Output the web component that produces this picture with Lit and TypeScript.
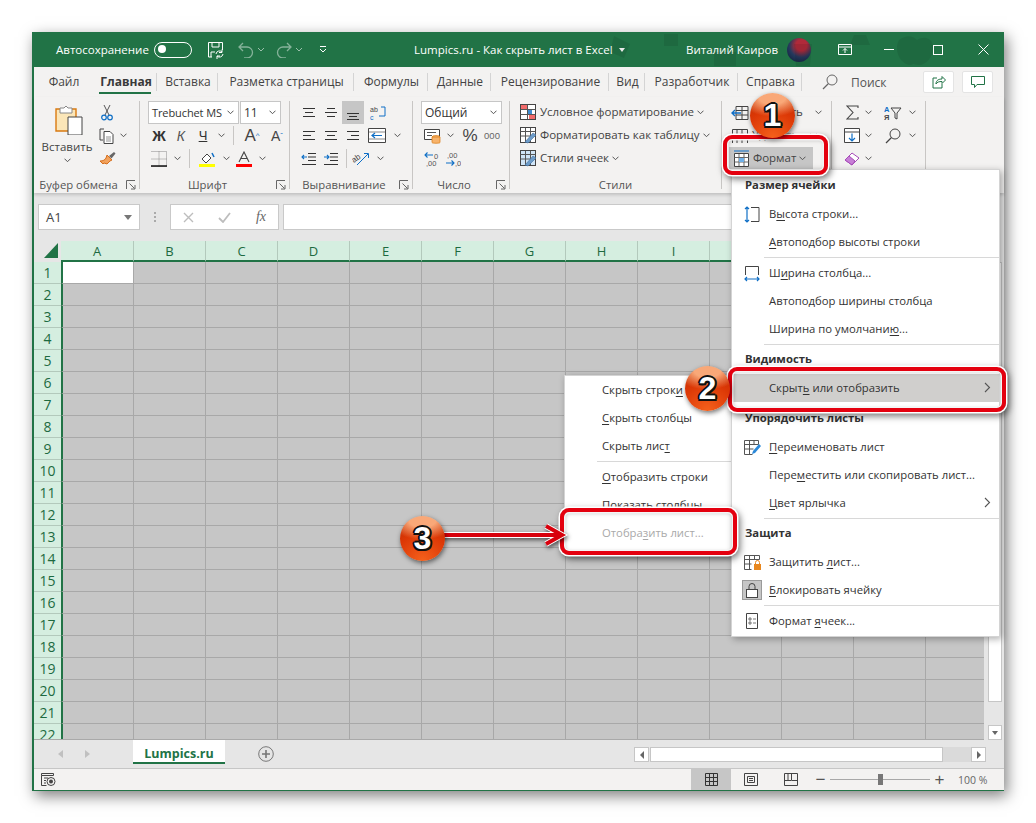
import { LitElement, html, css, svg } from "lit";
import { customElement } from "lit/decorators.js";

const chev = html`<svg class="chev" width="7" height="5" viewBox="0 0 7 5"><path d="M.5 .7l3 3 3-3" fill="none" stroke="#555" stroke-width="1"/></svg>`;
const launcher = html`<svg class="launch" width="10" height="10" viewBox="0 0 10 10"><path d="M.5 9V.5H9M3.5 3.5l5 5M9 5v4H5" fill="none" stroke="#666"/></svg>`;
const lines = (ys: [number, number][]) => html`<svg width="16" height="16" viewBox="0 0 16 16">${ys.map(([a, b], i) => svg`<path d="M${a} ${3 + i * 4}.5H${b}" stroke="#333" stroke-width="1"/>`)}</svg>`;
const cell = (x: string) => html`<svg width="18" height="16" viewBox="0 0 18 16">${x === "ins" ? svg`<path d="M5 1.5h12v13H5zM5 5.5h12M5 10h12M11 2v12" fill="none" stroke="#444"/><path d="M1 8h9M4 5L1 8l3 3" fill="none" stroke="#0f6fc6" stroke-width="1.4"/>` : svg`<path d="M1.5 1.5h15v5h-15zM6 1.5v5M11 1.5v5M1.5 11h15v4M1.5 11v4M6 11v4M11 11v4" fill="none" stroke="#444"/><path d="M9 6l4 4M13 6l-4 4" stroke="#d13438" stroke-width="1.2"/>`}</svg>`;
const tableIcon = (brush: boolean) => html`<svg width="17" height="17" viewBox="0 0 17 17"><rect x=".5" y=".5" width="15" height="15" fill="${brush ? "#fff" : "#cfe4f6"}" stroke="#444"/><path d="M.5 4.5h15M5.5 1v14M10.5 1v14M.5 9h15" stroke="#555" fill="none"/><path d="M5 15L13 6l3 2-8 8z" fill="#6d9cc9" stroke="#3d6d9f" stroke-width=".6"/></svg>`;

const menu1: any[] = [
  ["h", "Размер ячейки"],
  ["i", html`В<u>ы</u>сота строки...`, "rowh"],
  ["i", html`<u>А</u>втоподбор высоты строки`],
  ["s"],
  ["i", html`Ш<u>и</u>рина столбца...`, "colw"],
  ["i", html`Автоподбор ширины столбца`],
  ["i", html`Ширина по умолчани<u>ю</u>...`],
  ["s"],
  ["h", "Видимость", "flush"],
  ["i", html`Скрыт<u>ь</u> или отобразить`, "", "sub hov"],
  ["h", "Упорядочить листы", "gap"],
  ["i", html`<u>П</u>ереименовать лист`, "ren"],
  ["i", html`Пере<u>м</u>естить или скопировать лист...`],
  ["i", html`<u>Ц</u>вет ярлычка`, "", "sub"],
  ["s"],
  ["h", "Защита", "flush"],
  ["i", html`Защитить <u>л</u>ист...`, "prot"],
  ["i", html`<u>Б</u>локировать ячейку`, "lock"],
  ["s"],
  ["i", html`Формат <u>я</u>чеек...`, "fmt"],
];

const icons: Record<string, any> = {
  rowh: html`<svg width="16" height="17" viewBox="0 0 16 17"><path d="M7 1.5h8v14H7" fill="none" stroke="#444"/><path d="M3 1v15M1 3l2-2 2 2M1 14l2 2 2-2" fill="none" stroke="#0f6fc6" stroke-width="1.2"/></svg>`,
  colw: html`<svg width="16" height="17" viewBox="0 0 16 17"><path d="M1.5 10V1.5h13V10" fill="none" stroke="#444"/><path d="M1 14h14M3 12l-2 2 2 2M13 12l2 2-2 2" fill="none" stroke="#0f6fc6" stroke-width="1.2"/></svg>`,
  ren: html`<svg width="17" height="17" viewBox="0 0 17 17"><path d="M.5 1.5h14v4M.5 1.5v14h8M.5 5.5h14M.5 10h9M5.5 2v13M10 2v4" fill="none" stroke="#555"/><path d="M8 15l1-3 6-7 2 2-6 7z" fill="#2b88d8"/></svg>`,
  prot: html`<svg width="17" height="17" viewBox="0 0 17 17"><path d="M.5 1.5h15v4M.5 1.5v14h7M.5 5.5h15M.5 10h7M5.5 2v13M10.5 2v4" fill="none" stroke="#555"/><rect x="10" y="10" width="7" height="6" fill="#e8871e"/><path d="M11.5 10V8.5a2 2 0 014 0V10" fill="none" stroke="#e8871e"/></svg>`,
  lock: html`<span class="lockbg"><svg width="14" height="16" viewBox="0 0 14 16"><rect x="1.5" y="7.5" width="11" height="8" fill="#fff" stroke="#444"/><path d="M4 7.5V4.5a3 3 0 016 0v3" fill="none" stroke="#444"/></svg></span>`,
  fmt: html`<svg width="14" height="16" viewBox="0 0 14 16"><path d="M1.5.5h11v15h-11z" fill="#fff" stroke="#444"/><path d="M4 5h2v2H4zM4 9h2v2H4zM8 6h3M8 10h3" fill="none" stroke="#555" stroke-width=".8"/></svg>`,
};

const renderMenu = (items: any[]) => items.map((m) => {
  if (m[0] === "h") return html`<div class="mh ${m[2] || ""}">${m[1]}</div>`;
  if (m[0] === "s") return html`<div class="ms"></div>`;
  return html`<div class="mi ${m[3] || ""}"><span class="mic">${m[2] ? icons[m[2]] : ""}</span><span class="mt">${m[1]}</span>${(m[3] || "").includes("sub") ? html`<svg class="arr" width="7" height="11" viewBox="0 0 7 11"><path d="M1 1l4.5 4.5L1 10" fill="none" stroke="#555" stroke-width="1.1"/></svg>` : ""}</div>`;
});

@customElement("app-root")
export class AppRoot extends LitElement {
  static styles = css`
    :host { display: block; position: relative; width: 1036px; height: 823px; background: #fff; padding: 32px 32px 0; box-sizing: border-box; overflow: hidden;
      font-family: "Open Sans", "Noto Sans", sans-serif; font-size: 11.5px; color: #444; }
    u { text-decoration-thickness: 1px; text-underline-offset: 2px; }
    svg { display: block; flex: none; }
    .win { width: 972px; height: 759px; box-sizing: border-box; display: flex; flex-direction: column; border-left: 2px solid #217346; border-bottom: 1px solid #217346; box-shadow: 3px 5px 14px rgba(0,0,0,.5); background: #f3f2f1; }
    .title { position: relative; height: 35px; margin-left: -2px; background: #217346; color: #fff; display: flex; align-items: center; flex: none; overflow: hidden; font-size: 11.5px; }
    .title > * { flex: none; }
    .doodle { position: absolute; right: 0; top: 0; opacity: .08; }
    .auto { margin-left: 24px; width: 98px; }
    .toggle { box-sizing: border-box; width: 38px; height: 16px; border: 1.4px solid #fff; border-radius: 9px; position: relative; }
    .toggle::after { content: ""; position: absolute; left: 3px; top: 2.5px; width: 8px; height: 8px; border-radius: 50%; background: #fff; }
    .t-save { margin-left: 15px; }
    .t-undo { margin-left: 14px; opacity: .45; }
    .t-ch { margin-left: 3px; opacity: .55; }
    .t-redo { margin-left: 11px; opacity: .45; }
    .t-cust { margin-left: 16px; }
    .doc { margin-left: 87px; width: 207px; white-space: nowrap; }
    .doc i { display: inline-block; margin-left: 6px; border: 3px solid transparent; border-top: 4px solid #fff; border-bottom: 0; vertical-align: 2px; }
    .user { margin-left: 65px; width: 101px; white-space: nowrap; }
    .avatar { width: 24px; height: 24px; border-radius: 50%; background: radial-gradient(circle at 60% 30%, #b02a3a 0 25%, #25395d 55%, #0c1b33 100%); }
    .t-opt { margin-left: 27px; }
    .t-min { margin-left: 32px; }
    .t-max { margin-left: 39px; }
    .t-close { margin-left: 35px; }

    .tabs { height: 30px; display: flex; align-items: center; flex: none; position: relative; }
    .tab { box-sizing: border-box; height: 18px; line-height: 18px; text-align: center; white-space: nowrap; font-size: 12px; }
    .bar { border-right: 1px solid #d4d4d4; padding-left: 2px; }
    .w60 { width: 60px; } .w63 { width: 63px; } .w61 { width: 61px; } .w136 { width: 136px; } .w74 { width: 74px; } .w118 { width: 118px; } .w36 { width: 36px; } .w93 { width: 93px; } .w64 { width: 64px; }
    .active { font-weight: 700; color: #3a3a3a; position: relative; }
    .active::after { content: ""; position: absolute; left: 5px; right: 5px; top: 19px; height: 2px; background: #217346; }
    .search { margin-left: 20px; display: flex; align-items: center; gap: 13px; font-size: 12px; color: #555; }
    .tbtn { position: absolute; top: 4px; width: 31px; height: 22px; box-sizing: border-box; background: #fff; border: 1px solid #e4e4e4; border-radius: 2px; display: flex; align-items: center; justify-content: center; }
    .share { left: 889px; } .comment { left: 928px; }

    .ribbon { height: 96px; display: flex; flex: none; position: relative; box-shadow: 0 2px 3px rgba(0,0,0,.16); }
    .grp { box-sizing: border-box; border-right: 1px solid #c8c6c4; height: 88px; margin-top: 4px; display: flex; flex-direction: column; position: relative; }
    .g1 { width: 106px; } .g2 { width: 150px; } .g3 { width: 123px; } .g4 { width: 97px; } .g5 { width: 212px; } .g6 { width: 110px; } .g7 { width: 94px; }
    .body { flex: none; height: 70px; box-sizing: border-box; }
    .g1 .body { display: flex; }
    .lbl { height: 14px; line-height: 13px; margin-top: 7px; text-align: center; font-size: 11.3px; color: #555; white-space: nowrap; box-sizing: border-box; }
    .g1 .lbl { padding-right: 16px; } .g2 .lbl { padding-right: 14px; } .g3 .lbl { padding-right: 14px; } .g4 .lbl { padding-right: 14px; }
    .launch { position: absolute; right: 3px; bottom: -1px; }
    .paste { width: 62px; margin-left: 2px; display: flex; flex-direction: column; align-items: center; }
    .paste svg:first-child { margin-top: 4px; margin-left: 3px; }
    .paste span { margin-top: 4px; line-height: 16px; }
    .paste .chev { margin-top: 3px; }
    .r { height: 23px; display: flex; align-items: center; white-space: nowrap; }
    .c { display: flex; align-items: center; justify-content: center; height: 23px; flex: none; box-sizing: border-box; }
    .c22 { width: 22px; } .c14 { width: 14px; } .c18 { width: 18px; } .c26 { width: 26px; } .c20 { width: 20px; } .c24 { width: 24px; }
    .on { background: #c6c6c6; }
    .vsep { width: 1px; height: 19px; background: #c8c6c4; margin: 0 5px; flex: none; }
    .pl9 { padding-left: 8px; }
    .select { box-sizing: border-box; height: 23px; background: #fff; border: 1px solid #c6c6c6; display: flex; align-items: center; justify-content: space-between; padding: 0 4px 0 3px; font-size: 12px; color: #333; flex: none; }
    .sfont { width: 91px; font-size: 11px; letter-spacing: -.1px; }
    .ssize { width: 41px; margin-left: 1px; }
    .snum { width: 81px; }
    .b { font: 700 15px "Liberation Sans", sans-serif; color: #333; }
    .it { font: italic 14px "Liberation Sans", sans-serif; color: #555; }
    .un { font: 13px "Liberation Sans", sans-serif; color: #333; text-decoration: underline; }
    .fa { font: 17px "Liberation Sans", sans-serif; color: #444; position: relative; }
    .fa2 { font: 14px "Liberation Sans", sans-serif; color: #444; }
    .fa sup, .fa2 sup { font-size: 8px; color: #0f6fc6; vertical-align: 6px; line-height: 0; }
    .pct { font: 17px "Liberation Sans", sans-serif; color: #444; }
    .th { font: 9.5px "Liberation Sans", sans-serif; color: #666; }
    .stylerow { padding-left: 10px; gap: 3px; }
    .stylerow span, .cellrow span, .fmtbtn span { padding-bottom: 2px; }
    .cellrow { padding-left: 9px; gap: 3px; }
    .cellrow .chev { margin-left: 9px; }
    .fmtbtn { margin-left: 7px; width: 84px; padding-left: 4px; box-sizing: border-box; gap: 3px; background: #c6c6c6; }
    .ed { padding-left: 11px; }
    .ml6 { margin-left: 6px; }

    .fbar { height: 48px; background: #e6e6e6; flex: none; display: flex; padding-top: 11px; box-sizing: border-box; }
    .fb { box-sizing: border-box; height: 26px; background: #fff; border: 1px solid #c9c9c9; display: flex; align-items: center; flex: none; }
    .name { width: 102px; margin-left: 4px; padding: 0 7px; justify-content: space-between; font-size: 13px; }
    .name i { border: 4px solid transparent; border-top: 5px solid #777; border-bottom: 0; }
    .dots { width: 30px; display: flex; flex-direction: column; align-items: center; justify-content: center; gap: 2px; height: 26px; flex: none; }
    .dots b { width: 2px; height: 2px; background: #aaa; }
    .fx { width: 109px; justify-content: space-between; padding: 0 12px; }
    .fxt { font: italic 14px "Liberation Serif", serif; color: #666; }
    .input { flex: 1; margin: 0 4px; }

    .sheet { height: 499px; display: flex; flex: none; background: #e6e6e6; }
    .smain { width: 950px; display: flex; flex-direction: column; overflow: hidden; flex: none; border-bottom: 1px solid #a9a9a9; box-sizing: border-box; }
    .hrow { display: flex; height: 21px; flex: none; background: #e6e6e6; }
    .corner { width: 27px; flex: none; background: #e6e6e6; position: relative; }
    .corner svg { position: absolute; left: 10px; top: 2px; }
    .hc { width: 72px; flex: none; box-sizing: border-box; background: #d5eee0; border-right: 1px solid #b3c9bc; border-bottom: 2px solid #217346; text-align: center; font-size: 13px; line-height: 21px; color: #1d6a40; }
    .hc.first { width: 73px; }
    .row { display: flex; height: 22px; flex: none; }
    .rh { width: 27px; flex: none; box-sizing: border-box; background: #d5eee0; border-bottom: 1px solid #b3c9bc; text-align: center; font-size: 14px; line-height: 21px; color: #1d6a40; }
    .gc { width: 72px; flex: none; box-sizing: border-box; background: #c6c6c6; border-right: 1px solid #a8a8a8; border-bottom: 1px solid #a8a8a8; }
    .gc.first { width: 73px; border-left: 2px solid #217346; }
    .gc.sel { background: #fff; }
    .vs { flex: 1; display: flex; flex-direction: column; padding: 21px 2px 0 4px; }
    .vthumb { height: 440px; background: #fff; border: 1px solid #c6c6c6; box-sizing: border-box; }
    .vdown { margin-top: auto; height: 15px; background: #fff; border: 1px solid #c6c6c6; box-sizing: border-box; display: flex; align-items: center; justify-content: center; }
    .vdown i { border: 3.5px solid transparent; border-top: 4px solid #666; border-bottom: 0; }

    .stabs { height: 28px; background: #e6e6e6; display: flex; flex: none; }
    .nav { width: 99px; flex: none; box-sizing: border-box; padding: 0 24px; display: flex; align-items: center; height: 28px; gap: 22px; }
    .nav i { display: block; border: 4px solid transparent; }
    .nav .l { border-right: 5px solid #c0c0c0; border-left: 0; }
    .nav .g { border-left: 5px solid #c0c0c0; border-right: 0; }
    .stab { width: 92px; height: 24px; box-sizing: border-box; padding-top: 3px; background: #fff; border-bottom: 2px solid #217346; text-align: center; font-weight: 700; font-size: 12.5px; line-height: 22px; color: #217346; flex: none; }
    .plus { margin-left: 33px; margin-top: 6px; flex: none; }
    .hs { margin-left: 360px; margin-top: 7px; width: 352px; height: 15px; display: flex; flex: none; }
    .hb { width: 15px; height: 15px; flex: none; box-sizing: border-box; background: #fff; border: 1px solid #c6c6c6; display: flex; align-items: center; justify-content: center; }
    .hb i { border: 4px solid transparent; }
    .hb .l { border-right: 4px solid #666; border-left: 0; }
    .hb .g { border-left: 4px solid #666; border-right: 0; }
    .hthumb { width: 293px; margin-left: 1px; background: #fff; border: 1px solid #c6c6c6; box-sizing: border-box; flex: none; }
    .htrack { flex: 1; background: #dadada; }

    .status { flex: 1; border-top: 1px solid #c6c6c6; display: flex; align-items: center; box-sizing: border-box; }
    .st-ic { margin-left: 7px; }
    .st-sp { flex: 1; }
    .vb { width: 40px; height: 21px; display: flex; align-items: center; justify-content: center; flex: none; }
    .vb.act { background: #c6c6c6; }
    .zm { width: 19px; display: flex; justify-content: center; font: 17px "Liberation Sans", sans-serif; color: #555; line-height: 20px; flex: none; }
    .slider { width: 100px; height: 1px; background: #a8a8a8; position: relative; flex: none; }
    .slider b { position: absolute; left: 48px; top: -5px; width: 5px; height: 11px; background: #777; }
    .pc { width: 55px; box-sizing: border-box; padding-left: 9px; font-size: 10.5px; color: #666; flex: none; white-space: nowrap; }

    .menu { position: absolute; box-sizing: border-box; background: #fff; border: 1px solid #d4d4d4; box-shadow: 2px 2px 7px rgba(0,0,0,.32); color: #333; font-size: 11.3px; }
    .m1 { left: 731px; top: 169px; width: 269px; height: 468px; padding-top: 1px; z-index: 3; }
    .m2 { left: 564px; top: 375px; width: 168px; height: 178px; z-index: 2; }
    .mh { height: 29px; line-height: 28px; box-sizing: border-box; padding-left: 13px; font-weight: 700; color: #333; }
    .mh.flush { margin-top: -1px; }
    .mh.gap { margin-top: 2px; }
    .mi { height: 28px; display: flex; align-items: center; white-space: nowrap; padding-left: 12px; gap: 9px; position: relative; }
    .mt { padding-bottom: 2px; }
    .mic { width: 16px; height: 17px; display: flex; align-items: center; justify-content: center; flex: none; }
    .lockbg { display: flex; align-items: center; justify-content: center; flex: none; width: 20px; height: 20px; background: #c6c6c6; border: 1px solid #9a9a9a; box-sizing: border-box; }
    .hov { background: #d0cfcd; }
    .arr { position: absolute; right: 8px; top: 8px; }
    .ms { height: 1px; background: #d8d8d8; margin: 1px 0 1px 32px; }
    .m2 .mi { padding-left: 37px; }
    .m2 .dis { color: #a9a9a9; }

    .rbox { position: absolute; box-sizing: border-box; border: 4px solid #e4000f; border-radius: 9px; box-shadow: 0 0 0 1.5px #fff, inset 0 0 0 1.5px #f4f4f4, 2px 3px 7px 1px rgba(0,0,0,.55), inset 1px 1px 4px rgba(0,0,0,.25); z-index: 4; }
    .rb1 { left: 723px; top: 135px; width: 105px; height: 40px; }
    .rb2 { left: 728px; top: 367px; width: 278px; height: 45px; }
    .rb3 { left: 560px; top: 508px; width: 177px; height: 47px; }
    .badge { position: absolute; width: 45px; height: 45px; border-radius: 50%; z-index: 6; display: flex; align-items: center; justify-content: center;
      background: radial-gradient(ellipse 34px 20px at 50% 8%, #f9a878 0 40%, rgba(249,168,120,0) 100%), radial-gradient(circle at 50% 100%, #f5611c 0, #dc3806 55%, #b82a00 100%);
      box-shadow: 1px 2px 5px rgba(0,0,0,.55);
      font: 700 32px "Liberation Sans", sans-serif; color: #fff;
      text-shadow: -2px 0 #111, 2px 0 #111, 0 -2px #111, 0 2px #111, -1.5px -1.5px #111, 1.5px -1.5px #111, -1.5px 1.5px #111, 1.5px 1.5px #111; }
    .ba { left: 750px; top: 93px; }
    .bb { left: 685px; top: 366px; }
    .bc { left: 400px; top: 516px; }
    .arrow { position: absolute; left: 440px; top: 519px; z-index: 5; filter: drop-shadow(1px 2px 2px rgba(0,0,0,.6)); }
  `;

  render() {
    const cols = "ABCDEFGHIJKLM".split("");
    const rows = Array.from({ length: 22 }, (_, i) => i + 1);
    return html`
      <div class="win">
        <div class="title">
          <svg class="doodle" width="400" height="35" viewBox="0 0 400 35"><path d="M295 8c8-6 14-4 18 0 6-4 14-3 16 5 2 9-6 20-14 20-4 0-5-2-8 0-10 0-18-14-12-25z" fill="#000"/><path d="M190 12h18l-2 22h-14zM200 12l4-9" fill="#000"/><path d="M60 2h14v12H60zM110 20h22v14h-22zM10 4l16 8-6 14-14-6zM250 3h12l4 10h-20z" fill="#000"/></svg>
          <span class="auto">Автосохранение</span>
          <span class="toggle"></span>
          <svg class="t-save" width="17" height="18" viewBox="0 0 17 18"><path d="M5 16H1.5V1.5h14V9M5 1.5V6h7V1.5M4 16v-5h4" fill="none" stroke="#fff"/><path d="M9 13a3.5 3.5 0 016-2M16 13a3.5 3.5 0 01-6 2M15 8.500v3h-3M10 18v-3h3" fill="none" stroke="#fff" stroke-width="1"/></svg>
          <svg class="t-undo" width="16" height="16" viewBox="0 0 16 16"><path d="M5 1L1 5l4 4M1 5h8a5.500 5.500 0 010 11H6" fill="none" stroke="#fff" stroke-width="1.3"/></svg>
          <svg class="t-ch" width="8" height="5" viewBox="0 0 8 5"><path d="M1 1l3 3 3-3" fill="none" stroke="#fff"/></svg>
          <svg class="t-redo" width="16" height="16" viewBox="0 0 16 16"><path d="M11 1l4 4-4 4M15 5H7a5.500 5.500 0 000 11h3" fill="none" stroke="#fff" stroke-width="1.3"/></svg>
          <svg class="t-ch" width="8" height="5" viewBox="0 0 8 5"><path d="M1 1l3 3 3-3" fill="none" stroke="#fff"/></svg>
          <svg class="t-cust" width="8" height="7" viewBox="0 0 8 7"><path d="M1 .5h6M1 3l3 3 3-3" fill="none" stroke="#fff"/></svg>
          <span class="doc">Lumpics.ru - Как скрыть лист в Excel<i></i></span>
          <span class="user">Виталий Каиров</span>
          <span class="avatar"></span>
          <svg class="t-opt" width="14" height="11" viewBox="0 0 14 11"><path d="M.5.500h13v10H.5zM1 3h12M7 9V4.500M5 6.500l2-2 2 2" fill="none" stroke="#fff"/></svg>
          <svg class="t-min" width="10" height="1" viewBox="0 0 10 1"><path d="M0 .5h10" stroke="#fff"/></svg>
          <svg class="t-max" width="10" height="10" viewBox="0 0 10 10"><rect x=".5" y=".5" width="9" height="9" fill="none" stroke="#fff"/></svg>
          <svg class="t-close" width="11" height="11" viewBox="0 0 11 11"><path d="M.5.500l10 10M10.500.500l-10 10" stroke="#fff"/></svg>
        </div>

        <div class="tabs">
          <span class="tab w60">Файл</span>
          <span class="tab w63 bar active">Главная</span>
          <span class="tab w61 bar">Вставка</span>
          <span class="tab w136 bar">Разметка страницы</span>
          <span class="tab w74 bar">Формулы</span>
          <span class="tab w63 bar">Данные</span>
          <span class="tab w118 bar">Рецензирование</span>
          <span class="tab w36 bar">Вид</span>
          <span class="tab w93 bar">Разработчик</span>
          <span class="tab w64 bar">Справка</span>
          <span class="search"><svg width="16" height="16" viewBox="0 0 16 16"><circle cx="10" cy="6" r="5" fill="none" stroke="#666"/><path d="M6.500 9.500L1 15" stroke="#666" stroke-width="1.2"/></svg><span>Поиск</span></span>
          <span class="tbtn share"><svg width="14" height="14" viewBox="0 0 14 14"><path d="M5 3H1v10h9V9" fill="none" stroke="#217346"/><path d="M4 9c0-4 3-5 6-5V1.500L13.500 5 10 8.500V6.500C7 6.500 5 7 4 9z" fill="none" stroke="#217346"/></svg></span>
          <span class="tbtn comment"><svg width="14" height="13" viewBox="0 0 14 13"><path d="M.5.500h13v8H6l-2.500 3v-3h-3z" fill="none" stroke="#217346"/></svg></span>
        </div>

        <div class="ribbon">
          <div class="grp g1">
            <div class="body">
              <div class="paste">
                <svg width="28" height="30" viewBox="0 0 28 30"><path d="M1 4h20v22H1z" fill="#fbe6b8" stroke="#d97a10" stroke-width="1.4"/><path d="M5 3h4l2-2 2 2h4v5H5z" fill="#fff" stroke="#888"/><path d="M13 12h14v18H13z" fill="#fff" stroke="#444"/></svg>
                <span>Вставить</span>${chev}
              </div>
              <div>
                <div class="r"><span class="c c18"><svg width="12" height="17" viewBox="0 0 12 17"><path d="M3 1l5 10M9 1L4 11" stroke="#555" fill="none"/><circle cx="3" cy="13.500" r="2.300" fill="none" stroke="#0f6fc6" stroke-width="1.200"/><circle cx="9" cy="13.500" r="2.300" fill="none" stroke="#0f6fc6" stroke-width="1.200"/></svg></span></div>
                <div class="r"><span class="c c18"><svg width="16" height="16" viewBox="0 0 16 16"><path d="M5 1H1v11h3" fill="none" stroke="#444"/><path d="M5 3.500h6l3 3v9H5z" fill="#fff" stroke="#444"/><path d="M7 9h5M7 11h5M7 13h5" stroke="#666" stroke-width=".7"/></svg></span><span class="c c14">${chev}</span></div>
                <div class="r"><span class="c c18"><svg width="17" height="15" viewBox="0 0 17 15"><path d="M10 5l5-4 1.500 1.500-4 5z" fill="#666"/><path d="M8 4l5 5-2 1-3 3-3-1-1 1-3-3c3 0 5-1 6-3z" fill="#f2a25c" stroke="#d1640f" stroke-width=".9"/></svg></span></div>
              </div>
            </div>
            <div class="lbl">Буфер обмена</div>${launcher}
          </div>

          <div class="grp g2">
            <div class="body pl9">
              <div class="r"><span class="select sfont">Trebuchet MS${chev}</span><span class="select ssize">11${chev}</span></div>
              <div class="r"><span class="c c22 b">Ж</span><span class="c c22 it">К</span><span class="c c22 un">Ч</span><span class="c c14">${chev}</span><span class="vsep"></span><span class="c c26 fa">A<sup>^</sup></span><span class="c c24 fa2">A<sup>ˇ</sup></span></div>
              <div class="r"><span class="c c22"><svg width="16" height="16" viewBox="0 0 16 16"><path d="M.5.500h15v15H.5M8 .500v15M.5 8h15" fill="none" stroke="#888" stroke-dasharray="1 1"/><path d="M0 15h16" stroke="#111" stroke-width="1.500"/></svg></span><span class="c c14">${chev}</span><span class="vsep"></span><span class="c c24"><svg width="17" height="16" viewBox="0 0 17 16"><path d="M3 8l5-5 4 4-5 5z" fill="#fff" stroke="#444"/><path d="M13 2l2 4" stroke="#0f6fc6" stroke-width="1.500"/><path d="M0 13h16v3H0z" fill="#ffff00"/></svg></span><span class="c c14">${chev}</span><span class="c c22"><svg width="16" height="16" viewBox="0 0 16 16"><path d="M3 11L8 1l5 10M5 7.500h6" fill="none" stroke="#444" stroke-width="1.100"/><path d="M0 13h16v3H0z" fill="#ff0000"/></svg></span><span class="c c14">${chev}</span></div>
            </div>
            <div class="lbl">Шрифт</div>${launcher}
          </div>

          <div class="grp g3">
            <div class="body pl9">
              <div class="r"><span class="c c22">${lines([[2, 14], [4, 12], [2, 14]])}</span><span class="c c22">${lines([[4, 12], [2, 14], [4, 12]])}</span><span class="c c22 on"><svg width="16" height="16" viewBox="0 0 16 16"><path d="M2 8.500h12M4 11.500h8M2 14.500h12" stroke="#333"/></svg></span><span class="c c26"><svg width="17" height="16" viewBox="0 0 17 16"><text x="1" y="7" font-size="7" font-family="Liberation Sans" fill="#444">ab</text><text x="1" y="15" font-size="7" font-family="Liberation Sans" fill="#0f6fc6">c</text><path d="M12 2h4v9h-6" fill="none" stroke="#0f6fc6"/></svg></span></div>
              <div class="r"><span class="c c22">${lines([[2, 14], [2, 10], [2, 14]])}</span><span class="c c22">${lines([[2, 14], [4, 12], [2, 14]])}</span><span class="c c22">${lines([[2, 14], [6, 14], [2, 14]])}</span><span class="c c26"><svg width="18" height="15" viewBox="0 0 18 15"><path d="M.5.500h17v14H.5z" fill="#fff" stroke="#444"/><path d="M1 4h16M1 11h16" stroke="#888"/><path d="M14 7.500H4M7 5L4 7.500 7 10" fill="none" stroke="#0f6fc6" stroke-width="1.200"/></svg></span><span class="c c14">${chev}</span></div>
              <div class="r"><span class="c c22"><svg width="16" height="14" viewBox="0 0 16 14"><path d="M7 1.500h8M7 5h8M7 8.500h8M1 12.500h14" stroke="#333"/><path d="M6 5H1M3 3L1 5l2 2" fill="none" stroke="#0f6fc6" stroke-width="1.100"/></svg></span><span class="c c22"><svg width="16" height="14" viewBox="0 0 16 14"><path d="M7 1.500h8M7 5h8M7 8.500h8M1 12.500h14" stroke="#333"/><path d="M1 5h5M4 3l2 2-2 2" fill="none" stroke="#0f6fc6" stroke-width="1.100"/></svg></span><span class="vsep" style="margin:0 0 0 4px"></span><span class="c c26"><svg width="17" height="15" viewBox="0 0 17 15"><text x="0" y="10" font-size="8" font-family="Liberation Sans" fill="#444" transform="rotate(-35 4 8)">ab</text><path d="M5 14L16 3M12 2.500h4.500V7" fill="none" stroke="#0f6fc6"/></svg></span><span class="c c14">${chev}</span></div>
            </div>
            <div class="lbl">Выравнивание</div>${launcher}
          </div>

          <div class="grp g4">
            <div class="body pl9">
              <div class="r"><span class="select snum">Общий${chev}</span></div>
              <div class="r"><span class="c c22"><svg width="17" height="16" viewBox="0 0 17 16"><path d="M.5 1.500h15v10H.5z" fill="#fff" stroke="#444"/><path d="M3 4h9v1H3zM3 7h5v1H3z" fill="#555"/><ellipse cx="12" cy="9" rx="4" ry="1.500" fill="#f7b36b" stroke="#d97a10" stroke-width=".7"/><path d="M8 9v5.500c0 1 8 1 8 0V9z" fill="#f7b36b" stroke="#d97a10" stroke-width=".7"/></svg></span><span class="c c14">${chev}</span><span class="c c26 pct">%</span><span class="c c18 th">000</span></div>
              <div class="r"><span class="c c22"><svg width="16" height="16" viewBox="0 0 16 16"><path d="M9 4H1M3.500 1.500L1 4l2.500 2.500" fill="none" stroke="#0f6fc6" stroke-width="1.100"/><text x="10" y="8" font-size="7.500" font-family="Liberation Sans" fill="#555">0</text><text x="2" y="15" font-size="7.500" font-family="Liberation Sans" fill="#555">,00</text></svg></span><span class="c c20"><svg width="16" height="16" viewBox="0 0 16 16"><text x="2" y="7" font-size="7.500" font-family="Liberation Sans" fill="#555">,00</text><path d="M1 12h8M6.500 9.500L9 12l-2.500 2.500" fill="none" stroke="#0f6fc6" stroke-width="1.100"/><text x="10" y="15" font-size="7.500" font-family="Liberation Sans" fill="#555">,0</text></svg></span></div>
            </div>
            <div class="lbl">Число</div>${launcher}
          </div>

          <div class="grp g5">
            <div class="body">
              <div class="r stylerow"><svg width="17" height="17" viewBox="0 0 17 17"><rect x=".5" y=".5" width="15" height="15" fill="#fff" stroke="#444"/><path d="M1 1h6v4H1zM9 11h6v4H9z" fill="#f26b6b"/><path d="M7 5h5v6H7z" fill="#0f6fc6" opacity=".8"/><path d="M.5 5.500h15M.5 10.500h15M7.500 1v14" stroke="#555"/></svg><span>Условное форматирование</span>${chev}</div>
              <div class="r stylerow">${tableIcon(true)}<span>Форматировать как таблицу</span>${chev}</div>
              <div class="r stylerow">${tableIcon(false)}<span>Стили ячеек</span>${chev}</div>
            </div>
            <div class="lbl">Стили</div>
          </div>

          <div class="grp g6">
            <div class="body">
              <div class="r cellrow">${cell("ins")}<span>Вставить</span>${chev}</div>
              <div class="r cellrow">${cell("del")}<span>Удалить</span>${chev}</div>
              <div class="r fmtbtn"><svg width="17" height="17" viewBox="0 0 17 17"><path d="M1.500 3.500h14v13h-14z" fill="#fff" stroke="#444"/><path d="M1.500 7.500h14M1.500 12h14M6 4v12M11 4v12" stroke="#666"/><path d="M6 8h5v4H6z" fill="#6fb0e8"/><path d="M1 1h15" stroke="#0f6fc6"/></svg><span>Формат</span>${chev}</div>
            </div>
            <div class="lbl">Ячейки</div>
          </div>

          <div class="grp g7">
            <div class="body ed">
              <div class="r"><span class="c c18"><svg width="13" height="15" viewBox="0 0 13 15"><path d="M12 3V1H1l6 6.500L1 14h11v-2" fill="none" stroke="#444" stroke-width="1.100"/></svg></span><span class="c c14">${chev}</span><span class="c c24 ml6"><svg width="18" height="16" viewBox="0 0 18 16"><text x="0" y="7" font-size="7.500" font-weight="700" font-family="Liberation Sans" fill="#0f6fc6">А</text><text x="0" y="15" font-size="7.500" font-weight="700" font-family="Liberation Sans" fill="#444">Я</text><path d="M7 3h10l-4 5v6l-2-1V8z" fill="none" stroke="#444"/></svg></span><span class="c c14">${chev}</span></div>
              <div class="r"><span class="c c18"><svg width="16" height="15" viewBox="0 0 16 15"><path d="M.5.500h15v14H.5zM1 4h14" fill="#fff" stroke="#444"/><path d="M8 5.500v7M5 10l3 3 3-3" fill="none" stroke="#0f6fc6" stroke-width="1.200"/></svg></span><span class="c c14">${chev}</span><span class="c c24 ml6"><svg width="16" height="16" viewBox="0 0 16 16"><circle cx="10" cy="6" r="5" fill="none" stroke="#444"/><path d="M6.500 9.500L1 15" stroke="#444" stroke-width="1.200"/></svg></span><span class="c c14">${chev}</span></div>
              <div class="r"><span class="c c18"><svg width="16" height="14" viewBox="0 0 16 14"><path d="M1 8l7-7 7 5-7 7z" fill="#fff" stroke="#a64ab8"/><path d="M1 8l4-4 6 5-3 4z" fill="#c77fd6" stroke="#a64ab8"/></svg></span><span class="c c14">${chev}</span></div>
            </div>
            <div class="lbl">Редактирование</div>
          </div>
        </div>

        <div class="fbar">
          <div class="fb name"><span>A1</span><i></i></div>
          <div class="dots"><b></b><b></b><b></b></div>
          <div class="fb fx">
            <svg width="11" height="11" viewBox="0 0 11 11"><path d="M1 1l9 9M10 1l-9 9" stroke="#bdbdbd" stroke-width="1.400"/></svg>
            <svg width="13" height="11" viewBox="0 0 13 11"><path d="M1 6l4 4 7-9" fill="none" stroke="#bdbdbd" stroke-width="1.800"/></svg>
            <span class="fxt">fx</span>
          </div>
          <div class="fb input"></div>
        </div>

        <div class="sheet">
          <div class="smain">
            <div class="hrow">
              <div class="corner"><svg width="14" height="15" viewBox="0 0 14 15"><path d="M14 0v15H0z" fill="#217346"/></svg></div>
              ${cols.map((c, i) => html`<div class="hc ${i === 0 ? "first" : ""}">${c}</div>`)}
            </div>
            ${rows.map((r) => html`<div class="row"><div class="rh">${r}</div>${cols.map((_, i) => html`<div class="gc ${i === 0 ? "first" : ""} ${i === 0 && r === 1 ? "sel" : ""}"></div>`)}</div>`)}
          </div>
          <div class="vs"><div class="vthumb"></div><div class="vdown"><i></i></div></div>
        </div>

        <div class="stabs">
          <div class="nav"><i class="l"></i><i class="g"></i></div>
          <div class="stab">Lumpics.ru</div>
          <svg class="plus" width="16" height="16" viewBox="0 0 16 16"><circle cx="8" cy="8" r="7.300" fill="none" stroke="#777"/><path d="M8 4v8M4 8h8" stroke="#777" stroke-width="1.600"/></svg>
          <div class="hs"><div class="hb"><i class="l"></i></div><div class="hthumb"></div><div class="htrack"></div><div class="hb"><i class="g"></i></div></div>
        </div>

        <div class="status">
          <svg class="st-ic" width="15" height="13" viewBox="0 0 15 13"><path d="M.5.500h12v2H.5zM.5 2.500v10h5M3 5h4M3 7.500h2M3 10h2" fill="none" stroke="#444"/><circle cx="10" cy="8.500" r="4" fill="none" stroke="#444"/><circle cx="10" cy="8.500" r="2" fill="#444"/></svg>
          <span class="st-sp"></span>
          <span class="vb act"><svg width="13" height="13" viewBox="0 0 13 13"><path d="M.5.500h12v12H.5zM4.500 1v12M8.500 1v12M1 4.500h12M1 8.500h12" fill="none" stroke="#333"/></svg></span>
          <span class="vb"><svg width="14" height="13" viewBox="0 0 14 13"><path d="M.5.500h13v12H.5zM3.500 3.500h7v6h-7zM5 5.500h4M5 7.500h4" fill="none" stroke="#444"/></svg></span>
          <span class="vb"><svg width="14" height="13" viewBox="0 0 14 13"><path d="M.5.500h13v12H.5zM.5 7.500h7V1M4 1v6.500M8 7.500h5" fill="none" stroke="#444"/></svg></span>
          <span class="zm">−</span><span class="slider"><b></b></span><span class="zm">+</span>
          <span class="pc">100 %</span>
        </div>
      </div>

      <div class="menu m2">
        <div class="mi"><span class="mt">Скрыть строк<u>и</u></span></div>
        <div class="mi"><span class="mt"><u>С</u>крыть столбцы</span></div>
        <div class="mi"><span class="mt">Скрыть лис<u>т</u></span></div>
        <div class="ms"></div>
        <div class="mi"><span class="mt"><u>О</u>тобразить строки</span></div>
        <div class="mi"><span class="mt">Показать столбцы</span></div>
        <div class="mi dis"><span class="mt">Отобра<u>з</u>ить лист...</span></div>
      </div>
      <div class="menu m1">${renderMenu(menu1)}</div>

      <div class="rbox rb1"></div>
      <div class="rbox rb2"></div>
      <div class="rbox rb3"></div>
      <svg class="arrow" width="130" height="32" viewBox="0 0 130 32">
        <path d="M0 16h120M106 7l16 9-16 9" fill="none" stroke="#fff" stroke-width="6"/>
        <path d="M0 16h120M106 7l16 9-16 9" fill="none" stroke="#d8000c" stroke-width="4"/>
      </svg>
      <div class="badge ba">1</div>
      <div class="badge bb">2</div>
      <div class="badge bc">3</div>
    `;
  }
}
